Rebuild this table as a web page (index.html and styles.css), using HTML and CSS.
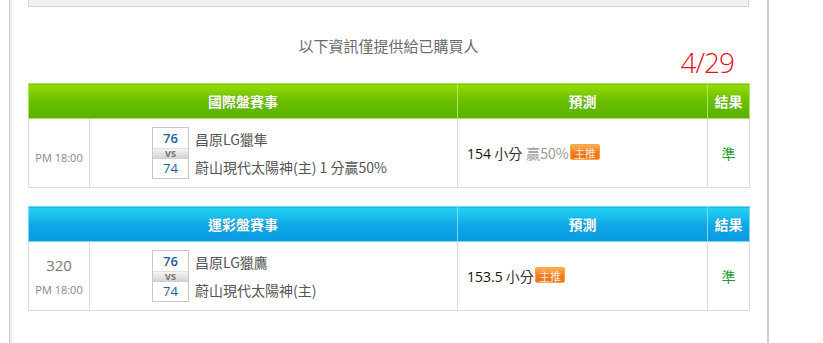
FILE: index.html
```html
<!DOCTYPE html>
<html lang="zh-Hant">
<head>
<meta charset="utf-8">
<link rel="stylesheet" href="styles.css">
</head>
<body>
<div class="page">
  <div class="topbox"></div>
  <p class="notice">以下資訊僅提供給已購買人</p>
  <div class="date">4/29</div>

  <table class="match green">
    <colgroup><col class="c1"><col class="c2"><col class="c3"><col class="c4"></colgroup>
    <thead>
      <tr><th colspan="2">國際盤賽事</th><th>預測</th><th>結果</th></tr>
    </thead>
    <tbody>
      <tr>
        <td class="time"><span class="t">PM 18:00</span></td>
        <td class="game">
          <div class="game-in">
            <div class="score"><div class="s1">76</div><div class="vs">VS</div><div class="s2">74</div></div>
            <div class="teams"><div>昌原LG獵隼</div><div>蔚山現代太陽神(主) 1 分贏50%</div></div>
          </div>
        </td>
        <td class="pred"><span class="num">154</span> <span class="kind">小分</span> <span class="rate">贏50%</span> <span class="badge">主推</span></td>
        <td class="res">準</td>
      </tr>
    </tbody>
  </table>

  <table class="match blue">
    <colgroup><col class="c1"><col class="c2"><col class="c3"><col class="c4"></colgroup>
    <thead>
      <tr><th colspan="2">運彩盤賽事</th><th>預測</th><th>結果</th></tr>
    </thead>
    <tbody>
      <tr>
        <td class="time"><span class="no">320</span><span class="t">PM 18:00</span></td>
        <td class="game">
          <div class="game-in">
            <div class="score"><div class="s1">76</div><div class="vs">VS</div><div class="s2">74</div></div>
            <div class="teams"><div>昌原LG獵鷹</div><div>蔚山現代太陽神(主)</div></div>
          </div>
        </td>
        <td class="pred"><span class="num">153.5</span> <span class="kind">小分</span> <span class="badge">主推</span></td>
        <td class="res">準</td>
      </tr>
    </tbody>
  </table>
</div>
</body>
</html>
```

FILE: styles.css
```css
html, body {
  margin: 0;
  padding: 0;
  background: #fff;
}
body {
  font-family: "Open Sans", "Noto Sans CJK TC", sans-serif;
  height: 343px;
  overflow: hidden;
}
.page {
  margin-left: 9px;
  width: 760px;
  height: 343px;
  border-left: 1px solid #c8c8c8;
  border-right: 2px solid #cfcfcf;
  padding: 0 18px;
  box-sizing: border-box;
  background: linear-gradient(to right, #ececec 0, #fafafa 4px, #fff 6px);
  background-repeat: no-repeat;
  background-size: 6px 100%;
}
.topbox {
  height: 6px;
  background: #f1f1f1;
  border: 1px solid #d4d4d4;
  border-top: none;
}
.notice {
  margin: 30px 0 0;
  text-align: center;
  font-family: "Noto Sans CJK TC", sans-serif;
  font-size: 15px;
  line-height: 18px;
  color: #6a6a6a;
}
.date {
  text-align: right;
  padding-right: 15px;
  font-family: "Open Sans", sans-serif;
  font-weight: 300;
  font-size: 28px;
  letter-spacing: -1px;
  line-height: 28px;
  color: #e50d1b;
  margin-top: -7px;
  height: 35px;
}
.match {
  width: 721px;
  border-collapse: collapse;
  table-layout: fixed;
  font-family: "Noto Sans CJK TC", sans-serif;
}
.match + .match { margin-top: 18px; }
.c1 { width: 61px; }
.c2 { width: 368px; }
.c3 { width: 250px; }
.c4 { width: 42px; }
.match th {
  height: 34px;
  padding: 0;
  color: #fff;
  font-size: 14px;
  font-weight: bold;
  text-align: center;
  text-shadow: 0 0 1px rgba(0,0,0,0.25);
}
.green th {
  background: linear-gradient(#97dc00, #6cc000 45%, #56b200);
  border: 1px solid #b0e45a;
}
.blue th {
  background: linear-gradient(#25d2f2, #0ea6e6 55%, #0a9ae2);
  border: 1px solid #7ad8f2;
}
.match td {
  border: 1px solid #dcdcdc;
  height: 68px;
  padding: 0;
  vertical-align: middle;
}
.time {
  text-align: center;
  color: #888;
}
.time .t {
  display: block;
  font-family: "Open Sans", sans-serif;
  font-size: 11px;
  line-height: 14px;
  padding-top: 9px;
}
.time .no {
  display: block;
  font-family: "Open Sans", sans-serif;
  font-size: 15px;
  line-height: 18px;
  color: #777;
}
.game-in {
  display: flex;
  align-items: center;
  padding-left: 62px;
}
.score {
  width: 37px;
  border: 1px solid #c8c8c8;
  box-sizing: border-box;
  text-align: center;
  font-family: "Open Sans", sans-serif;
  color: #1c5f9c;
  font-size: 13px;
}
.s1 { height: 20px; line-height: 20px; font-weight: 600; }
.s2 { height: 19px; line-height: 18px; }
.vs {
  height: 9px;
  line-height: 9px;
  font-size: 9px;
  font-weight: bold;
  color: #6f6f6f;
  background: linear-gradient(#f4f4f4, #d4d4d4);
  border-top: 1px solid #e0e0e0;
  border-bottom: 1px solid #d0d0d0;
}
.teams {
  margin-left: 6px;
  font-size: 14px;
  color: #555;
  display: flex;
  flex-direction: column;
  gap: 9px;
  line-height: 19px;
}
.pred {
  padding-left: 9px !important;
  color: #222;
  font-size: 14px;
  white-space: nowrap;
}
.pred .num {
  font-family: "Open Sans", sans-serif;
  font-size: 14px;
  color: #111;
}
.pred .kind { color: #333; }
.pred .rate { color: #999; margin-left: 1px; }
.badge {
  display: inline-block;
  vertical-align: 1px;
  width: 30px;
  height: 16px;
  line-height: 16px;
  font-size: 11px;
  color: #fde9d8;
  text-align: center;
  border-radius: 2px;
  box-sizing: border-box;
  border: 1px solid #f9a640;
  background: linear-gradient(#fbb05a, #f27a1e 55%, #ee7318);
  margin-left: -2px;
}
.res {
  text-align: center;
  color: #1e9a34;
  font-size: 14px;
}
```
